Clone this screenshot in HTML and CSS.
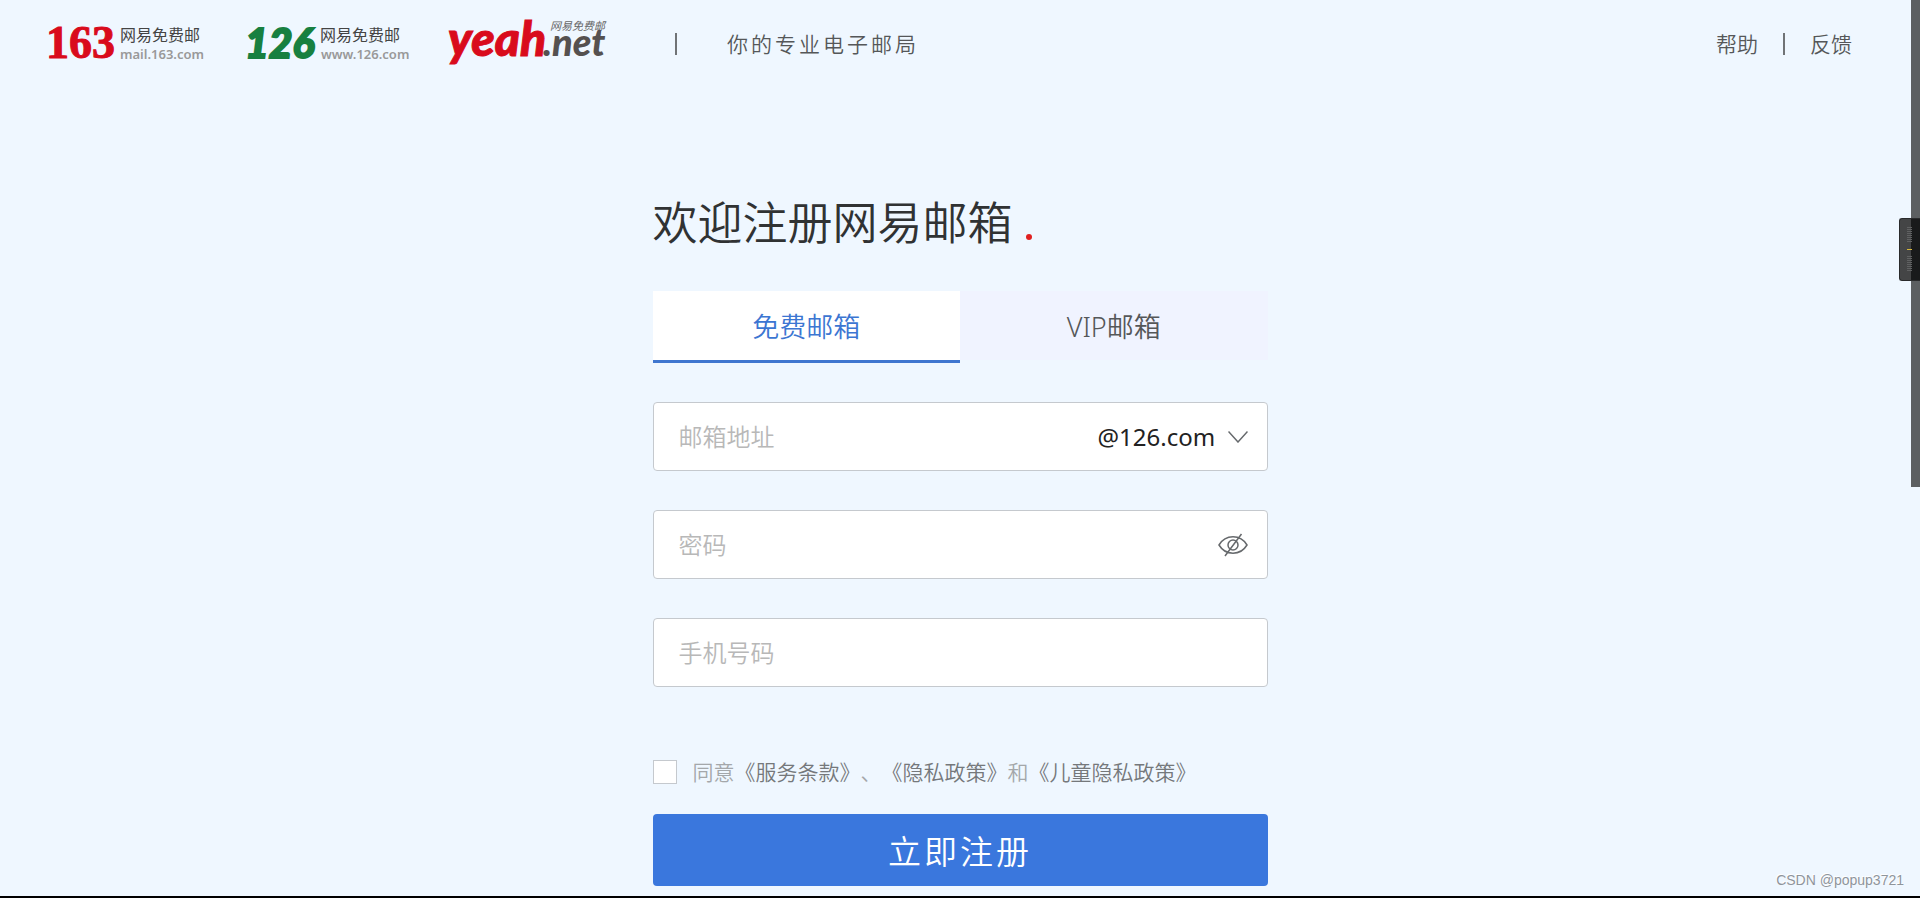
FILE: index.html
```html
<!DOCTYPE html>
<html lang="zh-CN">
<head>
<meta charset="utf-8">
<title>注册网易邮箱</title>
<link rel="stylesheet" href="styles.css">
</head>
<body>
<header class="header">
  <div class="logos">
    <a class="logo" href="#" aria-label="163网易免费邮">
      <svg width="160" height="48" viewBox="0 0 160 48">
        <text class="mark-163" x="-2" y="38">163</text>
        <text class="logo-name" x="72" y="21">网易免费邮</text>
        <text class="logo-host" x="72" y="39">mail.163.com</text>
      </svg>
    </a>
    <a class="logo" href="#" aria-label="126网易免费邮">
      <svg width="160" height="48" viewBox="0 0 160 48">
        <text class="mark-126" x="-3" y="38">126</text>
        <text class="logo-name" x="72" y="21">网易免费邮</text>
        <text class="logo-host" x="73" y="39">www.126.com</text>
      </svg>
    </a>
    <a class="logo" href="#" aria-label="yeah.net网易免费邮">
      <svg width="160" height="48" viewBox="0 0 160 48">
        <text class="mark-yeah" x="0" y="36">yeah</text>
        <text class="mark-net" x="95" y="36">.net</text>
        <text class="mark-small" x="102" y="10">网易免费邮</text>
      </svg>
    </a>
  </div>
  <span class="divider"></span>
  <p class="slogan">你的专业电子邮局</p>
  <nav class="links">
    <a href="#">帮助</a>
    <span class="divider"></span>
    <a href="#">反馈</a>
  </nav>
</header>

<main class="main">
  <h1 class="title">欢迎注册网易邮箱<span class="dot"></span></h1>
  <div class="tabs" role="tablist">
    <button class="tab tab-active" type="button" role="tab" aria-selected="true">免费邮箱</button>
    <button class="tab" type="button" role="tab" aria-selected="false">VIP邮箱</button>
  </div>
  <form class="form">
    <div class="field">
      <input class="input" type="text" placeholder="邮箱地址" aria-label="邮箱地址">
      <select class="domain" aria-label="邮箱域名">
        <option>@126.com</option>
      </select>
      <svg class="chevron" width="20" height="12" viewBox="0 0 20 12"><path d="M.5 .5 10 11 19.500 .5"/></svg>
    </div>
    <div class="field">
      <input class="input" type="password" placeholder="密码" aria-label="密码">
      <button class="eye" type="button" aria-label="显示密码">
        <svg width="30" height="24" viewBox="0 0 30 24"><path d="M1 12C4 7 9 3.800 15 3.800S26 7 29 12C26 17 21 20.200 15 20.200S4 17 1 12ZM23.500 1 7 23"/><circle cx="15" cy="12" r="5"/></svg>
      </button>
    </div>
    <div class="field">
      <input class="input" type="tel" placeholder="手机号码" aria-label="手机号码">
    </div>
    <div class="agree">
      <input class="check" type="checkbox" id="agree">
      <label for="agree">同意<a href="#">《服务条款》</a>、<a href="#">《隐私政策》</a>和<a href="#">《儿童隐私政策》</a></label>
    </div>
    <button class="submit" type="submit">立即注册</button>
  </form>
</main>

<div class="scrollbar"></div>
<div class="side-panel">
  <span class="ticks"></span>
  <span class="ticks-mark"></span>
  <span class="ticks"></span>
</div>
<div class="watermark">CSDN @popup3721</div>
</body>
</html>
```

FILE: styles.css
```css
* {
  box-sizing: border-box;
}

body {
  margin: 0;
  min-height: 100vh;
  background: #eff7ff;
  border-bottom: 2px solid #000;
  color: #555759;
  font-family: "Noto Sans", "Noto Sans CJK SC", sans-serif;
  font-weight: 350;
  text-spacing-trim: space-all;
}

a {
  color: inherit;
  text-decoration: none;
}

button,
input,
select {
  margin: 0;
  padding: 0;
  border: 0;
  background: none;
  color: inherit;
  font: inherit;
}

/* Header */
.header {
  display: flex;
  align-items: center;
  height: 88px;
  padding: 0 68px 0 48px;
  font-size: 21px;
  line-height: 32px;
}

.logos {
  display: flex;
  gap: 40px;
}

.logo svg {
  display: block;
  overflow: visible;
}

.mark-163 {
  fill: #d90b1c;
  stroke: #d90b1c;
  stroke-width: 1;
  font: 700 46px "Liberation Serif", serif;
}

.mark-126 {
  fill: #178040;
  stroke: #178040;
  stroke-width: 2;
  font: italic 900 41px Lato, sans-serif;
}

.mark-yeah {
  fill: #d90b1c;
  stroke: #d90b1c;
  stroke-width: 1;
  font: italic 900 48px Lato, sans-serif;
}

.mark-net {
  fill: #555150;
  font: italic 900 38px Lato, sans-serif;
}

.mark-small {
  fill: #666;
  font: italic 400 11px "Noto Sans CJK SC", sans-serif;
}

.logo-name {
  fill: #444;
  font: 400 16px "Noto Sans CJK SC", sans-serif;
}

.logo-host {
  fill: #999;
  font: 600 13px "Noto Sans", sans-serif;
}

.divider {
  width: 2px;
  height: 22px;
  background: #707376;
}

.logos + .divider {
  margin-left: 67px;
}

.slogan {
  margin: 0 0 0 50px;
  letter-spacing: 3px;
}

.links {
  display: flex;
  align-items: center;
  gap: 25px;
  margin-left: auto;
}

/* Registration form */
.main {
  width: 100%;
  max-width: 615px;
  margin: 0 auto;
  padding: 105px 0 10px;
}

.title {
  display: flex;
  align-items: baseline;
  gap: 13px;
  margin: 0 0 38px;
  color: #303233;
  font-size: 45px;
  font-weight: 350;
  line-height: 60px;
}

.dot {
  width: 6px;
  height: 6px;
  border-radius: 50%;
  background: #e02020;
}

.tabs {
  display: flex;
  height: 72px;
  margin-bottom: 39px;
}

.tab {
  flex: 1;
  border-bottom: 3px solid transparent;
  background: #f0f3ff;
  background-clip: padding-box;
  font-size: 27px;
}

.tab-active {
  border-color: #3f76cf;
  background: #fff;
  color: #3c76d2;
}

.form {
  display: flex;
  flex-direction: column;
  gap: 39px;
}

.field {
  display: flex;
  align-items: center;
  height: 69px;
  padding: 0 19px 0 25px;
  border: 1px solid #c5c9ce;
  border-radius: 4px;
  background: #fff;
  font-size: 24px;
}

.input {
  flex: 1;
  min-width: 0;
  height: 100%;
  outline: 0;
}

.input::placeholder {
  color: #b8b8b8;
  opacity: 1;
}

.domain {
  appearance: none;
  margin-right: 12px;
  color: #222;
  font-weight: 400;
}

.chevron,
.eye svg {
  display: block;
  fill: none;
  stroke: #66696c;
  stroke-width: 1.5;
}

.agree {
  display: flex;
  align-items: center;
  gap: 16px;
  height: 24px;
  margin-top: 34px;
  color: #a4a7aa;
  font-size: 21px;
  line-height: 24px;
}

.agree a {
  color: #75787b;
}

.check {
  appearance: none;
  width: 24px;
  height: 24px;
  border: 1px solid #c5c9ce;
  background: #fff;
}

.submit {
  height: 72px;
  margin-top: -9px;
  border-radius: 4px;
  background: #3a77dd;
  color: #fff;
  font-size: 33px;
  letter-spacing: 3px;
}

/* Overlays along the window edge */
.scrollbar {
  position: fixed;
  top: 0;
  right: 0;
  width: 9px;
  height: 487px;
  background: #5c5f61;
}

.side-panel {
  position: fixed;
  top: 218px;
  right: 0;
  display: flex;
  flex-direction: column;
  gap: 6px;
  width: 21px;
  height: 63px;
  padding: 8px 7px;
  border: 1px solid #292a2b;
  border-right: 0;
  border-radius: 3px 0 0 3px;
  background: linear-gradient(90deg, #444546 11px, #191a1b 11px);
}

.ticks {
  flex: 1;
  width: 5px;
  background: repeating-linear-gradient(#606162 0 1px, transparent 1px 2px);
}

.ticks-mark {
  width: 5px;
  height: 1px;
  background: #d8b83c;
}

.watermark {
  position: absolute;
  right: 16px;
  bottom: 8px;
  color: #8f959b;
  font: 14px/20px "Liberation Sans", Arial, sans-serif;
  text-shadow: -1px -1px 0 #fff;
}
```
